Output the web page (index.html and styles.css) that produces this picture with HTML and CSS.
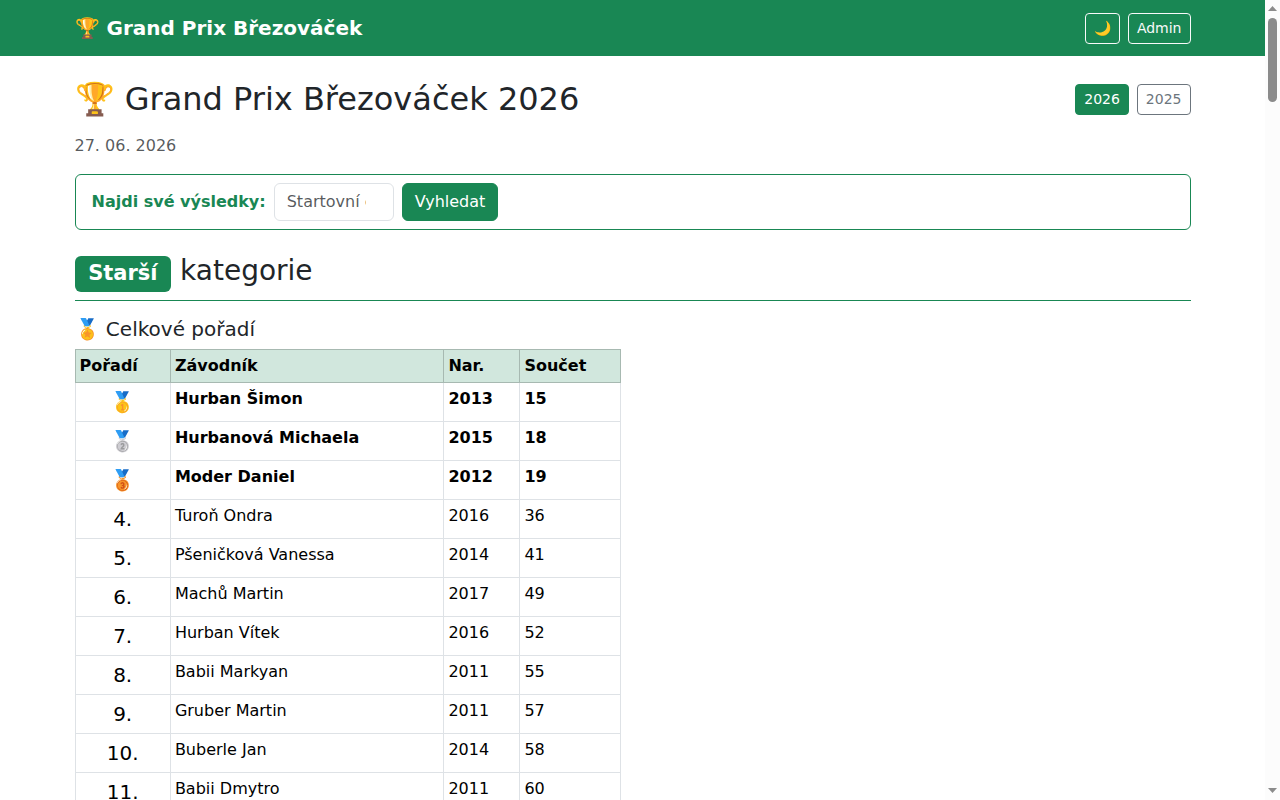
FILE: index.html
```html
<!DOCTYPE html>
<html lang="cs">

<head>
    <meta charset="UTF-8">
    <meta name="viewport" content="width=device-width, initial-scale=1.0">
    <title>Grand Prix Březováček</title>
    <link rel="stylesheet" href="styles.css">
</head>

<body>

    <nav class="navbar">
        <div class="container navbar-inner">
            <a class="navbar-brand" href="#">🏆 Grand Prix Březováček</a>
            <div class="button-group">
                <button class="btn btn-sm btn-outline-light" type="button">🌙</button>
                <a class="btn btn-sm btn-outline-light" href="#">Admin</a>
            </div>
        </div>
    </nav>

    <main class="container content">
        <div class="page-header">
            <h1>🏆 Grand Prix Březováček 2026</h1>
            <div class="button-group">
                <a class="btn btn-sm btn-success" href="#">2026</a>
                <a class="btn btn-sm btn-outline-secondary" href="#">2025</a>
            </div>
        </div>
        <p class="date">27. 06. 2026</p>

        <form class="search-card">
            <label for="number">Najdi své výsledky:</label>
            <input class="search-input" type="number" id="number" placeholder="Startovní číslo">
            <button class="btn btn-success" type="button">Vyhledat</button>
        </form>

        <h2><span class="badge">Starší</span> kategorie</h2>

        <section class="results">
            <h3>🏅 Celkové pořadí</h3>
            <table class="table">
                <colgroup>
                    <col class="col-rank">
                    <col class="col-name">
                    <col class="col-year">
                    <col class="col-total">
                </colgroup>
                <thead>
                    <tr><th>Pořadí</th><th>Závodník</th><th>Nar.</th><th>Součet</th></tr>
                </thead>
                <tbody>
                    <tr class="podium"><td class="rank">🥇</td><td>Hurban Šimon</td><td>2013</td><td>15</td></tr>
                    <tr class="podium"><td class="rank">🥈</td><td>Hurbanová Michaela</td><td>2015</td><td>18</td></tr>
                    <tr class="podium"><td class="rank">🥉</td><td>Moder Daniel</td><td>2012</td><td>19</td></tr>
                    <tr><td class="rank">4.</td><td>Turoň Ondra</td><td>2016</td><td>36</td></tr>
                    <tr><td class="rank">5.</td><td>Pšeničková Vanessa</td><td>2014</td><td>41</td></tr>
                    <tr><td class="rank">6.</td><td>Machů Martin</td><td>2017</td><td>49</td></tr>
                    <tr><td class="rank">7.</td><td>Hurban Vítek</td><td>2016</td><td>52</td></tr>
                    <tr><td class="rank">8.</td><td>Babii Markyan</td><td>2011</td><td>55</td></tr>
                    <tr><td class="rank">9.</td><td>Gruber Martin</td><td>2011</td><td>57</td></tr>
                    <tr><td class="rank">10.</td><td>Buberle Jan</td><td>2014</td><td>58</td></tr>
                    <tr><td class="rank">11.</td><td>Babii Dmytro</td><td>2011</td><td>60</td></tr>
                </tbody>
            </table>
        </section>
    </main>

    <div class="scrollbar">
        <svg class="scroll-arrow" width="9" height="5" viewBox="0 0 9 5"><path d="M0 5L4.5 0L9 5z"/></svg>
        <div class="scroll-thumb"></div>
        <svg class="scroll-arrow scroll-arrow-down" width="9" height="5" viewBox="0 0 9 5"><path d="M0 0L4.5 5L9 0z"/></svg>
    </div>

</body>

</html>
```
FILE: styles.css
```css
*,
*::before,
*::after {
    box-sizing: border-box;
}

body {
    height: 100vh;
    margin: 0;
    padding-right: 15px;
    overflow: hidden;
    font-family: "DejaVu Sans", sans-serif;
    font-size: 16px;
    line-height: 1.5;
    color: #212529;
    background: #fff;
}

h1, h2, h3, p {
    margin: 0;
    font-weight: 500;
    line-height: 1.2;
}

a {
    text-decoration: none;
}

.container {
    width: 100%;
    max-width: 1140px;
    margin: 0 auto;
    padding: 0 12px;
}

/* Navbar */
.navbar {
    padding: 8px 0;
    background: #198754;
}

.navbar-inner {
    display: flex;
    align-items: center;
    justify-content: space-between;
}

.navbar-brand {
    padding: 5px 0;
    font-size: 20px;
    font-weight: 700;
    color: #fff;
}

.button-group {
    display: flex;
    gap: 8px;
}

/* Buttons */
.btn {
    display: inline-block;
    padding: 6px 12px;
    border: 1px solid transparent;
    border-radius: 6px;
    font-family: inherit;
    font-size: 16px;
    line-height: 1.5;
    text-align: center;
    background: transparent;
    cursor: pointer;
}

.btn-sm {
    padding: 4px 8px;
    border-radius: 4px;
    font-size: 14px;
}

.btn-success {
    color: #fff;
    background: #198754;
    border-color: #198754;
}

.btn-outline-light {
    color: #f8f9fa;
    border-color: #f8f9fa;
}

.btn-outline-secondary {
    color: #6c757d;
    border-color: #6c757d;
}

/* Header */
.content {
    padding-top: 24px;
}

.page-header {
    display: flex;
    align-items: center;
    justify-content: space-between;
    margin-bottom: 16px;
}

h1 {
    font-size: 32px;
}

.date {
    margin-bottom: 16px;
    font-weight: 400;
    line-height: 1.5;
    color: rgba(33, 37, 41, 0.75);
}

/* Search */
.search-card {
    display: flex;
    align-items: center;
    gap: 8px;
    margin-bottom: 24px;
    padding: 8px 16px;
    border: 1px solid #198754;
    border-radius: 6px;
}

.search-card label {
    font-weight: 700;
    color: #198754;
}

.search-input {
    width: 120px;
    padding: 6px 12px;
    border: 1px solid #dee2e6;
    border-radius: 6px;
    font-family: inherit;
    font-size: 16px;
    line-height: 1.5;
    background: #fff;
}

.search-input::-webkit-inner-spin-button {
    height: auto;
}

.search-input::placeholder {
    color: rgba(33, 37, 41, 0.75);
}

/* Category */
h2 {
    margin-bottom: 16px;
    padding-bottom: 8px;
    border-bottom: 1px solid #198754;
    font-size: 28px;
}

.badge {
    display: inline-block;
    padding: 0.35em 0.65em;
    border-radius: 6px;
    font-size: 0.75em;
    font-weight: 700;
    line-height: 1;
    color: #fff;
    background: #198754;
}

h3 {
    margin-bottom: 8px;
    font-size: 20px;
}

.results {
    width: 546px;
}

/* Results table */
.table {
    width: 100%;
    table-layout: fixed;
    border-collapse: collapse;
    color: #000;
}

.col-rank {
    width: 95.4px;
}

.col-name {
    width: 273.5px;
}

.col-year {
    width: 76px;
}

.table th,
.table td {
    padding: 4px;
    border: 1px solid #dee2e6;
    text-align: left;
    vertical-align: top;
}

.table th {
    background: #d1e7dd;
    border-color: #a7b9b1;
}

.podium {
    font-weight: 700;
}

.table .rank {
    font-size: 20px;
    text-align: center;
}

/* Scrollbar */
.scrollbar {
    position: fixed;
    top: 0;
    right: 0;
    bottom: 0;
    display: flex;
    flex-direction: column;
    align-items: center;
    width: 15px;
    padding: 6px 0 7px;
    background: #fcfcfc;
}

.scroll-arrow {
    flex: none;
    fill: #8b8b8b;
}

.scroll-arrow-down {
    margin-top: auto;
}

.scroll-thumb {
    width: 9px;
    height: 84px;
    margin-top: 7px;
    border-radius: 5px;
    background: #8b8b8b;
}
```
